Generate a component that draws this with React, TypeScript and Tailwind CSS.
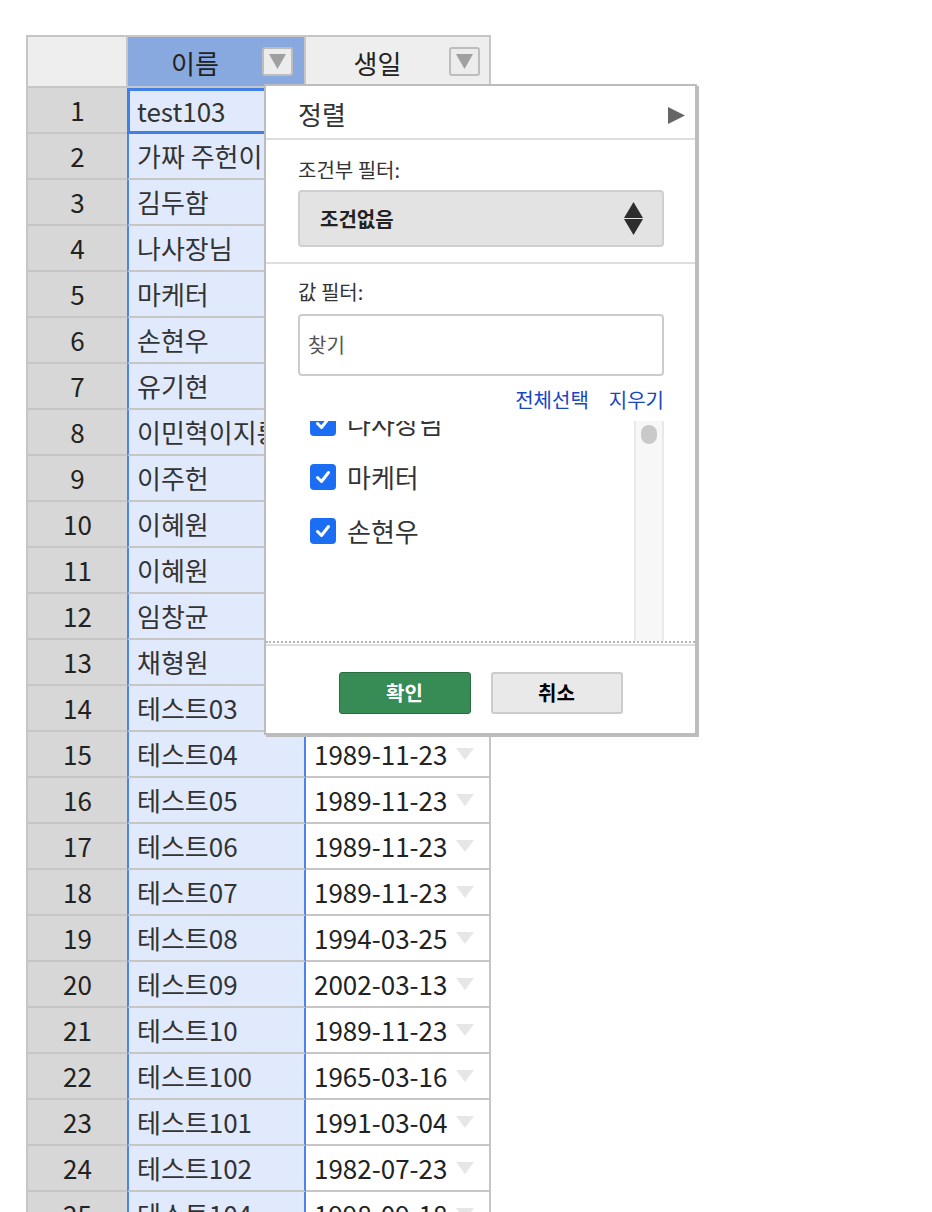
import React from 'react';

const rows: [string, string][] = [
  ['test103', '1990-01-01'],
  ['가짜 주헌이', '1991-02-14'],
  ['김두함', '1988-05-20'],
  ['나사장님', '1975-08-08'],
  ['마케터', '1993-04-11'],
  ['손현우', '1992-06-15'],
  ['유기현', '1992-11-22'],
  ['이민혁이지롱', '1993-11-03'],
  ['이주헌', '1994-10-06'],
  ['이혜원', '1995-01-17'],
  ['이혜원', '1995-01-17'],
  ['임창균', '1996-01-26'],
  ['채형원', '1994-01-15'],
  ['테스트03', '1989-11-23'],
  ['테스트04', '1989-11-23'],
  ['테스트05', '1989-11-23'],
  ['테스트06', '1989-11-23'],
  ['테스트07', '1989-11-23'],
  ['테스트08', '1994-03-25'],
  ['테스트09', '2002-03-13'],
  ['테스트10', '1989-11-23'],
  ['테스트100', '1965-03-16'],
  ['테스트101', '1991-03-04'],
  ['테스트102', '1982-07-23'],
  ['테스트104', '1998-09-18'],
];

const HeaderButton = () => (
  <div className="w-[31px] h-[29px] rounded-[3px] border-2 border-[#bdbdbd] bg-[#ececec] flex items-center justify-center">
    <svg width="17" height="15" viewBox="0 0 17 15">
      <path d="M0 0H17L8.5 15Z" fill="#a0a0a0" />
    </svg>
  </div>
);

const CheckItem = ({ label }: { label: string }) => (
  <div className="h-[54px] flex items-center pl-[12px] gap-[11px]">
    <span className="w-[26px] h-[26px] shrink-0 rounded-[4px] bg-[#1b6ef3] flex items-center justify-center">
      <svg width="18" height="18" viewBox="0 0 18 18">
        <path d="M3.5 9.5L7.5 13.5L14.5 4.5" fill="none" stroke="#fff" strokeWidth="3" strokeLinecap="round" strokeLinejoin="round" />
      </svg>
    </span>
    <span className="text-[26px] leading-[32px] text-[#333]">{label}</span>
  </div>
);

const FilterPanel = () => (
  <div className="absolute left-[264px] top-[84px] w-[433px] h-[651px] bg-white border-2 border-[#bcbcbc] shadow-[2px_2px_0_0_#bcbcbc] flex flex-col">
    <div className="h-[54px] shrink-0 border-b-2 border-[#dedede] pl-[32px] pr-[10px] pt-[12px] flex justify-between items-start">
      <span className="text-[26px] leading-[32px] text-[#333]">정렬</span>
      <svg width="17" height="17" viewBox="0 0 17 17" className="mt-[9px]">
        <path d="M0 0L17 8.5L0 17Z" fill="#666" />
      </svg>
    </div>

    <div className="h-[124px] shrink-0 border-b-2 border-[#dedede] pl-[32px] pr-[31px] pt-[16px]">
      <div className="text-[20px] leading-[28px] text-[#333]">조건부 필터:</div>
      <div className="mt-[6px] h-[57px] rounded-[4px] border-2 border-[#cfcfcf] bg-[#e3e3e3] pl-[20px] pr-[19px] flex items-center justify-between">
        <span className="text-[20px] font-bold text-[#222]">조건없음</span>
        <svg width="19" height="33" viewBox="0 0 19 33">
          <path d="M0 16L9.5 0L19 16Z M0 17H19L9.5 33Z" fill="#2d2d2d" />
        </svg>
      </div>
    </div>

    <div className="shrink-0 pl-[32px] pr-[31px] pt-[14px]">
      <div className="text-[20px] leading-[28px] text-[#333]">값 필터:</div>
      <div className="mt-[8px] h-[62px] rounded-[4px] border-2 border-[#cccccc] bg-white pl-[8px] flex items-center">
        <span className="text-[20px] text-[#555]">찾기</span>
      </div>
      <div className="mt-[10px] flex justify-end gap-[20px] text-[20px] leading-[28px] text-[#1846c1]">
        <span>전체선택</span>
        <span>지우기</span>
      </div>
      <div className="mt-[7px] h-[220px] flex">
        <div className="flex-1 overflow-hidden">
          <div className="-mt-[25px]">
            <CheckItem label="나사장님" />
            <CheckItem label="마케터" />
            <CheckItem label="손현우" />
          </div>
        </div>
        <div className="w-[30px] border-x-2 border-[#e8e8e8] bg-[#f7f7f7] pt-[4px] flex justify-center">
          <div className="w-[16px] h-[19px] rounded-full bg-[#c9c9c9]" />
        </div>
      </div>
    </div>

    <div className="shrink-0 border-t-2 border-dotted border-[#b5b5b5]" />
    <div className="shrink-0 mt-[1px] border-t-2 border-[#dedede]" />

    <div className="flex-1 flex justify-center gap-[20px] pt-[26px]">
      <button className="w-[132px] h-[42px] rounded-[3px] border border-[#2b6d41] bg-[#378b54] text-white text-[20px] font-bold">
        확인
      </button>
      <button className="w-[132px] h-[42px] rounded-[3px] border-2 border-[#cccccc] bg-[#e9e9e9] text-black text-[20px] font-bold">
        취소
      </button>
    </div>
  </div>
);

const App: React.FC = () => {
  return (
    <div className="relative w-[932px] h-[1212px] overflow-hidden bg-white font-['Noto_Sans_CJK_KR','Noto_Sans',sans-serif] text-[#222]">
      <div className="ml-[26px] mt-[35px] w-[465px] border-l-2 border-t-2 border-[#c6c6c6]">
        <div className="flex h-[51px]">
          <div className="w-[100px] bg-[#eeeeee] border-r-2 border-b-2 border-[#c6c6c6]" />
          <div className="w-[178px] bg-[#88a8e0] border-r-2 border-b-2 border-[#c6c6c6] pr-[11px] flex items-center">
            <span className="flex-1 text-center text-[26px] leading-[32px] pt-[2px]">이름</span>
            <HeaderButton />
          </div>
          <div className="w-[185px] bg-[#eeeeee] border-r-2 border-b-2 border-[#c6c6c6] pr-[9px] flex items-center">
            <span className="flex-1 text-center text-[26px] leading-[32px] pt-[2px]">생일</span>
            <HeaderButton />
          </div>
        </div>

        {rows.map(([name, birth], i) => (
          <div key={i} className="flex h-[46px] text-[26px] leading-[32px]">
            <div className="w-[99px] bg-[#d7d7d7] border-b-2 border-[#c6c6c6] flex items-center justify-center">
              {i + 1}
            </div>
            {i === 0 ? (
              <div className="w-[179px] bg-[#e1eafc] border-2 border-[#3f7fe9] shadow-[inset_0_0_0_1px_#3f7fe9] pl-[8px] flex items-center text-[#333]">
                {name}
              </div>
            ) : (
              <div className="w-[179px] bg-[#e1eafc] border-x-2 border-x-[#4a84ec] border-b-2 border-b-[#c6c6c6] pl-[8px] flex items-center text-[#333] whitespace-nowrap overflow-hidden">
                {name}
              </div>
            )}
            <div className="w-[185px] bg-white border-r-2 border-b-2 border-[#c6c6c6] pl-[8px] pr-[15px] flex items-center justify-between">
              <span>{birth}</span>
              <svg width="18" height="12" viewBox="0 0 18 12">
                <path d="M0 0H18L9 12Z" fill="#e6e6e6" />
              </svg>
            </div>
          </div>
        ))}
      </div>

      <FilterPanel />
    </div>
  );
};

export default App;
